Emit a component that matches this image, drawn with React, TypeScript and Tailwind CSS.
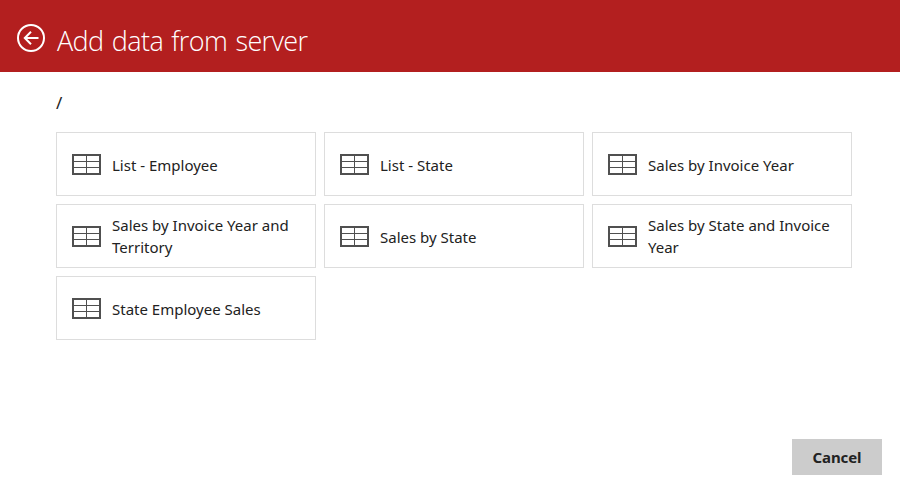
const items = [
  'List - Employee',
  'List - State',
  'Sales by Invoice Year',
  'Sales by Invoice Year and Territory',
  'Sales by State',
  'Sales by State and Invoice Year',
  'State Employee Sales',
];

function TableIcon() {
  return (
    <svg width="29" height="21" viewBox="0 0 29 21" fill="none" className="mt-px shrink-0" shapeRendering="crispEdges">
      <rect x="1" y="1" width="27" height="19" stroke="#505050" strokeWidth="2" />
      <path d="M2 7.5h25M2 13.5h25M14.5 2v17" stroke="#505050" />
    </svg>
  );
}

export default function App() {
  return (
    <div className="flex h-[495px] w-[900px] flex-col overflow-hidden bg-white font-['Noto_Sans','Open_Sans',sans-serif] text-[#222]">
      <header className="flex h-[72px] shrink-0 items-center bg-[#b31f1f] pl-4 pt-2 text-white">
        <svg width="30" height="30" viewBox="0 0 30 30" fill="none" stroke="currentColor" strokeWidth="2" className="-mt-1">
          <circle cx="15" cy="15" r="13" />
          <path d="M22.5 15H9M15 8.8 8.8 15l6.2 6.2" />
        </svg>
        <h1 className="ml-[11px] mt-px whitespace-nowrap font-['Open_Sans',sans-serif] text-[27px] font-light leading-9 tracking-[-0.6px] [word-spacing:1.8px]">Add data from server</h1>
      </header>
      <main className="px-14 pt-[19px]">
        <div className="h-[41px] text-[17px] leading-6">/</div>
        <div className="grid grid-cols-[260px_260px_260px] gap-2">
          {items.map((name) => (
            <div key={name} className="flex h-16 items-center border border-[#ddd] pl-[15px] pr-4">
              <TableIcon />
              <span className="ml-[11px] flex min-h-6 items-end text-[15px] leading-[22px]">{name}</span>
            </div>
          ))}
        </div>
      </main>
      <footer className="mt-auto flex justify-end pb-5 pr-[18px]">
        <button className="h-9 w-[90px] bg-[#ccc] text-[15px] font-bold tracking-[-0.1px]">Cancel</button>
      </footer>
    </div>
  );
}
